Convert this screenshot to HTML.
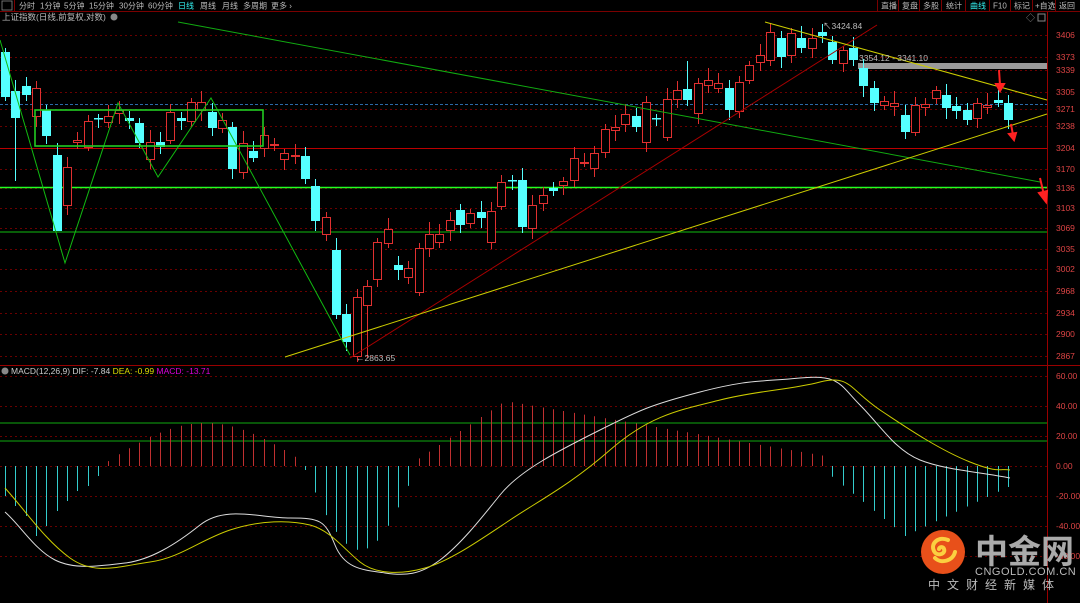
<!DOCTYPE html>
<html><head><meta charset="utf-8">
<style>
html,body{margin:0;padding:0;background:#000;width:1080px;height:603px;overflow:hidden;font-family:"Liberation Sans","Noto Sans CJK SC",sans-serif}
svg{position:absolute;left:0;top:0}
</style></head><body>
<svg id="s" width="1080" height="603" viewBox="0 0 1080 603" xmlns="http://www.w3.org/2000/svg" font-family="Liberation Sans, Noto Sans CJK SC, sans-serif">
<rect width="1080" height="603" fill="#000"/>
<line x1="0" y1="11.5" x2="1080" y2="11.5" stroke="#7a0000"/>
<rect x="2" y="1" width="10" height="9" fill="none" stroke="#888" stroke-width="0.8"/>
<line x1="14.5" y1="0" x2="14.5" y2="11" stroke="#7a0000"/>
<g font-size="8" fill="#bbb">
<text x="19" y="8.5">分时</text><text x="40" y="8.5">1分钟</text><text x="64" y="8.5">5分钟</text><text x="89" y="8.5">15分钟</text><text x="119" y="8.5">30分钟</text><text x="148" y="8.5">60分钟</text>
<text x="178" y="8.5" fill="#3ee">日线</text><text x="200" y="8.5">周线</text><text x="222" y="8.5">月线</text><text x="243" y="8.5">多周期</text><text x="271" y="8.5">更多 ›</text>
<text x="881" y="8.5">直播</text><text x="902" y="8.5">复盘</text><text x="923" y="8.5">多股</text><text x="946" y="8.5">统计</text><text x="970" y="8.5" fill="#3ee">曲线</text><text x="993" y="8.5">F10</text><text x="1014" y="8.5">标记</text><text x="1035" y="8.5">+自选</text><text x="1059" y="8.5">返回</text>
</g>
<g stroke="#7a0000"><line x1="877.5" y1="0" x2="877.5" y2="11"/><line x1="898.5" y1="0" x2="898.5" y2="11"/><line x1="919.5" y1="0" x2="919.5" y2="11"/><line x1="941.5" y1="0" x2="941.5" y2="11"/><line x1="965.5" y1="0" x2="965.5" y2="11"/><line x1="989.5" y1="0" x2="989.5" y2="11"/><line x1="1010.5" y1="0" x2="1010.5" y2="11"/><line x1="1032.5" y1="0" x2="1032.5" y2="11"/><line x1="1055.5" y1="0" x2="1055.5" y2="11"/></g>
<text x="2" y="20" font-size="8.5" fill="#bbb">上证指数(日线,前复权,对数)</text><circle cx="114" cy="17" r="3.5" fill="#888"/>
<text x="1026" y="21" font-size="9" fill="#888">◇</text><rect x="1038" y="14" width="7" height="7" fill="none" stroke="#888"/>
<line x1="1047.5" y1="12" x2="1047.5" y2="603" stroke="#900"/>
<line x1="0" y1="365.5" x2="1080" y2="365.5" stroke="#900"/>
<g id="grid" stroke="#6a0000" stroke-dasharray="2,3"></g>
<g id="lab" font-size="8.5" fill="#d44"></g>
<line x1="0" y1="104.5" x2="1047" y2="104.5" stroke="#2a6aa8" stroke-dasharray="3,2"/>
<line x1="0" y1="148.5" x2="1047" y2="148.5" stroke="#b00" />
<line x1="0" y1="187.5" x2="1047" y2="187.5" stroke="#2f2" stroke-width="1.6"/>
<line x1="0" y1="232" x2="1047" y2="232" stroke="#1b1"/>
<rect x="858" y="63" width="189" height="6" fill="#999"/>
<g id="cdl"></g>
<line x1="178" y1="22" x2="1040" y2="182" stroke="#1a1"/>
<line x1="350" y1="358" x2="877" y2="25" stroke="#a00"/>
<line x1="285" y1="357" x2="1047" y2="114" stroke="#cc0"/>
<line x1="765" y1="22" x2="1047" y2="100" stroke="#cc0"/>
<polyline points="0,40 65,263 118,103 158,177 211,98 350,355" fill="none" stroke="#1b1"/>
<rect x="35" y="110" width="228" height="36" fill="none" stroke="#2c2" stroke-width="1.6"/>
<g font-size="8.5" fill="#bbb"><text x="859" y="61">3354.12 - 3341.10</text><text x="823" y="29">↖3424.84</text><text x="356" y="361">←2863.65</text></g>
<g stroke="#f22" stroke-width="2" fill="#f22"><line x1="999" y1="70" x2="1000" y2="85"/><polygon points="996,84 1004,84 1000,91"/><line x1="1011" y1="124" x2="1013" y2="135"/><polygon points="1009,134 1016,133 1014,140"/><line x1="1040" y1="178" x2="1044" y2="195"/><polygon points="1039,193 1047,191 1046,202"/></g>
<circle cx="5" cy="371" r="3.5" fill="#888"/>
<text x="11" y="374" font-size="8.5" fill="#ccc">MACD(12,26,9)  DIF: -7.84 <tspan fill="#dd0">DEA: -0.99</tspan> <tspan fill="#d0d">MACD: -13.71</tspan></text>
<line x1="0" y1="423" x2="1047" y2="423" stroke="#1a1"/>
<line x1="0" y1="441" x2="1047" y2="441" stroke="#1a1"/>
<g id="hist"></g>
<path d="M5,512 C20,525 35,550 55,560 S100,566 125,563 S175,545 200,525 S260,518 290,518 S325,520 335,545 S365,570 385,573 S420,575 440,560 S480,520 500,495 S560,450 600,430 S650,405 700,392 S760,382 800,378 S840,385 860,405 S895,450 920,460 S980,472 1010,478" fill="none" stroke="#ddd"/>
<path d="M5,488 C25,510 45,540 70,558 S120,566 150,562 S200,540 230,530 S290,520 310,525 S345,550 360,562 S400,575 425,568 S480,540 510,520 S570,485 610,450 S680,410 720,400 S790,390 820,382 S850,390 880,410 S940,450 970,462 S1000,468 1010,470" fill="none" stroke="#cc0"/>
<circle cx="943" cy="552" r="22" fill="#e8501a"/>
<path d="M948,540 c-9,-4 -18,3 -14,11 c3,6 12,3 10,-2 c-1,-3 -5,-2 -5,0 M935,558 c6,6 18,3 20,-6" fill="none" stroke="#fbd040" stroke-width="4" stroke-linecap="round"/>
<text x="975" y="563" font-size="33" font-weight="bold" fill="#aaa" font-family="Noto Sans CJK SC, sans-serif">中金网</text>
<text x="975" y="575" font-size="11" fill="#bbb" letter-spacing="0.5">CNGOLD.COM.CN</text>
<text x="928" y="589" font-size="12" fill="#bbb" letter-spacing="7" font-family="Noto Sans CJK SC, sans-serif">中文财经新媒体</text>
</svg>
<script>
var NS="http://www.w3.org/2000/svg";
function el(p,t,a){var e=document.createElementNS(NS,t);for(var k in a)e.setAttribute(k,a[k]);document.getElementById(p).appendChild(e);return e;}
var ys=[35,57,70,92,109,126,148,169,188,208,228,249,269,291,313,334,356];
var lb=["3406","3373","3339","3305","3271","3238","3204","3170","3136","3103","3069","3035","3002","2968","2934","2900","2867"];
ys.forEach(function(y,i){el("grid","line",{x1:0,y1:y+.5,x2:1047,y2:y+.5});var t=el("lab","text",{x:1056,y:y+3});t.textContent=lb[i];});
var my=[376,406,436,466,496,526,556],ml=["60.00","40.00","20.00","0.00","-20.00","-40.00","-60.00"];
my.forEach(function(y,i){el("grid","line",{x1:0,y1:y+.5,x2:1047,y2:y+.5});var t=el("lab","text",{x:1056,y:y+3});t.textContent=ml[i];});
var C=[[52,97,0],[91,118,0],[86,95,0],[88,116,1],[110,136,0],[155,231,0],[167,205,1],[140,142,1],[121,147,1],[118,119,0],[116,122,1],[110,113,1],[118,121,0],[123,143,0],[142,159,1],[142,147,0],[112,140,1],[118,121,0],[102,121,1],[102,110,1],[112,128,0],[120,128,1],[127,169,0],[143,172,1],[151,158,0],[135,148,1],[144,145,1],[153,159,1],[155,156,1],[156,179,0],[186,221,0],[217,234,1],[250,315,0],[314,342,0],
[297,356,1],[286,305,1],[242,279,1],[229,243,1],[265,270,0],[268,277,1],[248,292,1],[234,248,1],[234,242,1],[220,230,1],[210,225,0],[213,223,1],[212,218,0],[211,242,1],[182,206,1],[180,181,0],[180,227,0],[205,228,1],[195,203,1],[188,191,0],[181,185,1],[158,180,1],[162,163,1],[153,168,1],[129,152,1],[127,130,1],[114,124,1],[116,127,0],[102,142,1],[118,119,0],[99,137,1],[90,99,1],[89,100,0],[83,113,1],
[80,85,1],[83,88,1],[88,110,0],[82,111,1],[65,80,1],[55,62,1],[32,60,1],[38,57,0],[33,55,1],[38,48,0],[38,48,1],[32,36,0],[42,60,0],[50,63,1],[48,60,0],[68,86,0],[88,103,0],[101,105,1],[103,106,1],[115,132,0],[105,132,1],[104,107,1],[90,98,1],[95,108,0],[106,111,0],[110,120,0],[103,118,1],[105,107,1],[100,103,0],[103,120,0]];
var N=C.length,step=(1008-5)/(N-1);
C.forEach(function(c,i){var x=Math.round(5+step*i),col=c[2]?"#e03030":"#5ff";
 var t=c[0],b=c[1];var wt=t-4-(i*7%9),wb=b+4+(i*5%8);
 if(i==1)wb=181; if(i==66)wt=61; if(i==5)wb=231; if(i==35)wb=358;
 el("cdl","line",{x1:x+.5,y1:wt,x2:x+.5,y2:wb,stroke:col});
 if(c[2])el("cdl","rect",{x:x-3.5,y:t+.5,width:8,height:Math.max(b-t,1),fill:"#000",stroke:col});
 else el("cdl","rect",{x:x-4,y:t,width:9,height:Math.max(b-t,1.5),fill:col});
 var v;
 if(x<105){v=-[30,40,50,70,60,45,35,25,20,10][i]||-10;}
 else if(x<305){v=40*Math.sin(Math.PI*(x-105)/200)+3;}
 else if(x<415){v=-(80*Math.sin(Math.PI*(x-305)/110)+4);}
 else if(x<825){v=x<505?5+60*(x-415)/90:65-55*(x-505)/320;}
 else{v=-(x<905?5+65*(x-825)/80:70-50*(x-905)/105);}
 el("hist","line",{x1:x+.5,y1:466,x2:x+.5,y2:466-v,stroke:v>0?"#c03030":"#3cc"});
});
</script>
</body></html>
